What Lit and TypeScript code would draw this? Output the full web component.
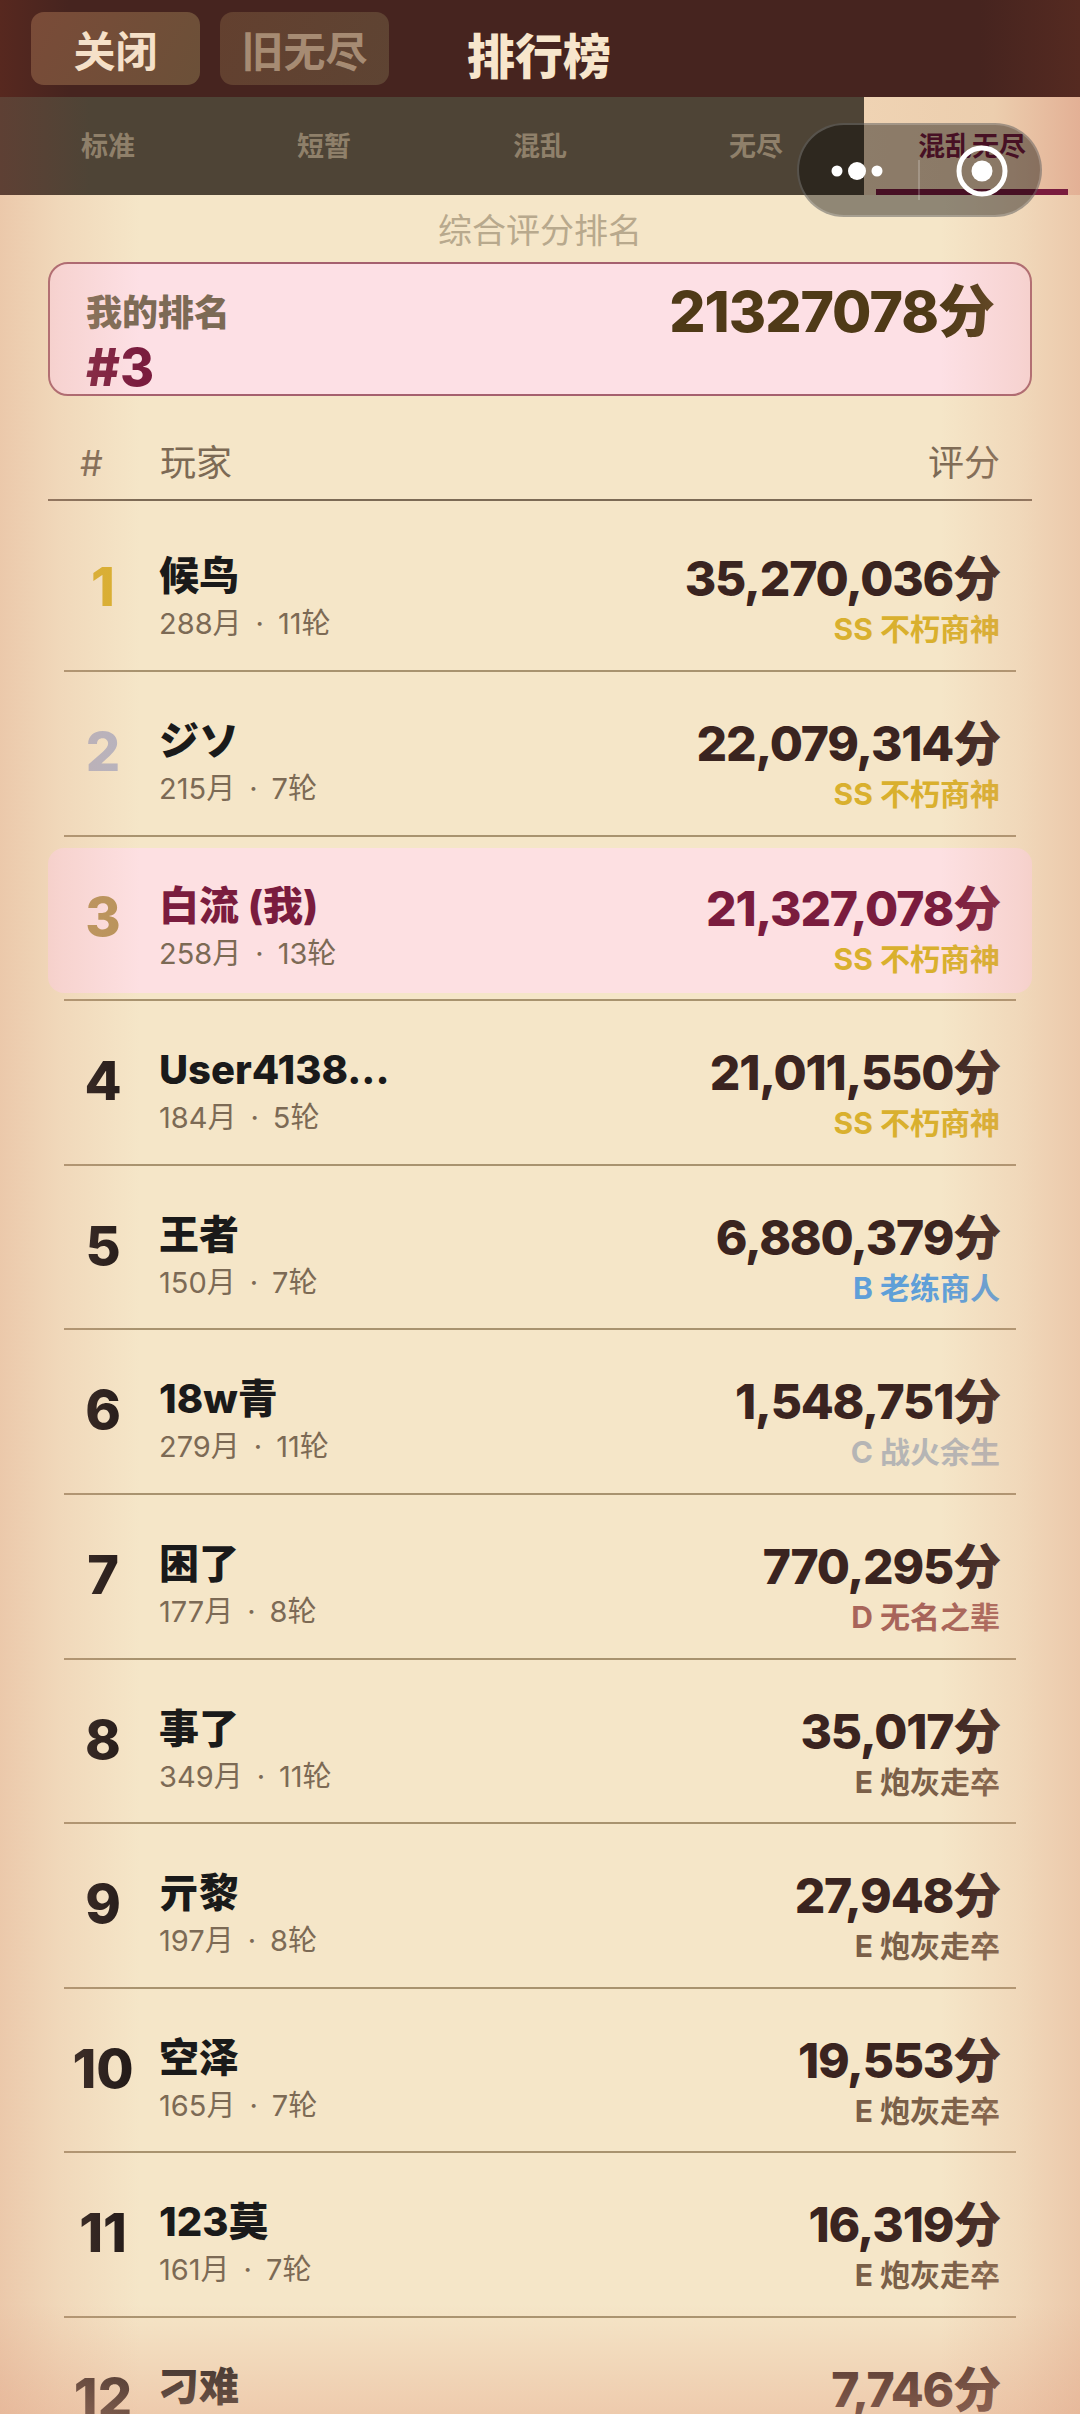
import { LitElement, html, css } from 'lit';
import { customElement } from 'lit/decorators.js';
import { classMap } from 'lit/directives/class-map.js';

interface Player {
  rank: number;
  name: string;
  months?: number;
  rounds?: number;
  score: string;
  grade?: string;
  gradeClass?: string;
  me?: boolean;
}

const ss = { grade: 'SS 不朽商神', gradeClass: 'g-ss' };
const e = { grade: 'E 炮灰走卒', gradeClass: 'g-e' };

const players: Player[] = [
  { rank: 1, name: '候鸟', months: 288, rounds: 11, score: '35,270,036', ...ss },
  { rank: 2, name: 'ジソ', months: 215, rounds: 7, score: '22,079,314', ...ss },
  { rank: 3, name: '白流 (我)', months: 258, rounds: 13, score: '21,327,078', me: true, ...ss },
  { rank: 4, name: 'User4138...', months: 184, rounds: 5, score: '21,011,550', ...ss },
  { rank: 5, name: '王者', months: 150, rounds: 7, score: '6,880,379', grade: 'B 老练商人', gradeClass: 'g-b' },
  { rank: 6, name: '18w青', months: 279, rounds: 11, score: '1,548,751', grade: 'C 战火余生', gradeClass: 'g-c' },
  { rank: 7, name: '困了', months: 177, rounds: 8, score: '770,295', grade: 'D 无名之辈', gradeClass: 'g-d' },
  { rank: 8, name: '事了', months: 349, rounds: 11, score: '35,017', ...e },
  { rank: 9, name: '亓黎', months: 197, rounds: 8, score: '27,948', ...e },
  { rank: 10, name: '空泽', months: 165, rounds: 7, score: '19,553', ...e },
  { rank: 11, name: '123莫', months: 161, rounds: 7, score: '16,319', ...e },
  { rank: 12, name: '刁难', score: '7,746' },
];

const tabs = ['标准', '短暂', '混乱', '无尽', '混乱无尽'];

@customElement('app-root')
export class AppRoot extends LitElement {
  static styles = css`
    :host {
      display: block;
      position: relative;
      width: 1080px;
      height: 2414px;
      overflow: hidden;
      background: #f5e6c8;
      font-family: Inter, 'Noto Sans CJK SC', sans-serif;
    }
    /* warm tint along the page edges, the dark bars carry their own */
    .vignette {
      position: absolute;
      inset: 195px 0 0;
      pointer-events: none;
      background:
        linear-gradient(90deg, rgba(222, 160, 130, 0.42), rgba(222, 160, 130, 0.2) 60px, transparent 140px),
        linear-gradient(270deg, rgba(222, 160, 130, 0.42), rgba(222, 160, 130, 0.2) 60px, transparent 140px),
        linear-gradient(0deg, rgba(228, 165, 135, 0.42), transparent 110px);
    }

    .topbar {
      height: 97px;
      box-sizing: border-box;
      padding-top: 12px;
      display: flex;
      background: linear-gradient(90deg, #57281f, #46241f 70px, #46241f 980px, #552a21);
    }
    .btn {
      width: 169px;
      height: 73px;
      margin-left: 31px;
      border-radius: 13px;
      display: flex;
      align-items: center;
      justify-content: center;
      font-size: 42px;
      font-weight: 700;
      color: #f5e0c8;
      background: linear-gradient(120deg, #7a4b38, #6b5038);
    }
    .btn + .btn {
      margin-left: 20px;
      color: #a68b73;
      background: linear-gradient(120deg, #63402f, #5e4433);
    }
    .title {
      margin: 8px 0 0 78px;
      font-size: 48px;
      line-height: 73px;
      font-weight: 900;
      color: #f7e6cc;
    }

    .tabs {
      height: 98px;
      display: flex;
      background: linear-gradient(90deg, #5e4034, #4e4436 90px);
    }
    .tab {
      width: 216px;
      box-sizing: border-box;
      padding-top: 32px;
      text-align: center;
      font-size: 27px;
      line-height: 36px;
      font-weight: 700;
      color: #8f806a;
    }
    .tab.active {
      height: 98px;
      color: #7a1c3e;
      background: linear-gradient(90deg, #efd3b3, #ecceae 130px, #e3b095);
    }
    .tab.active span {
      display: block;
      margin: -32px 12px 0;
      height: 98px;
      box-sizing: border-box;
      border-bottom: 6px solid #7a1c3e;
      padding-top: 32px;
    }

    .subtitle {
      height: 67px;
      text-align: center;
      font-size: 34px;
      line-height: 72px;
      color: #b8a98d;
    }

    .card {
      margin: 0 48px;
      height: 134px;
      box-sizing: border-box;
      padding: 0 36px;
      display: flex;
      justify-content: space-between;
      border: 2px solid #a5606e;
      border-radius: 20px;
      background: #fde0e5;
    }
    .card-label {
      margin-top: 24px;
      font-size: 36px;
      line-height: 50px;
      font-weight: 800;
      color: #7c6a55;
    }
    .card-rank {
      margin-top: 2px;
      font-size: 52px;
      line-height: 56px;
      font-weight: 800;
      color: #7a1c3e;
    }
    .card-score {
      margin-top: 14px;
      font-size: 57px;
      line-height: 68px;
      font-weight: 800;
      letter-spacing: -1px;
      color: #4f3a17;
    }

    .head {
      margin: 0 48px;
      height: 105px;
      box-sizing: border-box;
      padding: 44px 32px 0;
      display: flex;
      border-bottom: 2px solid #7c6a55;
      font-size: 36px;
      line-height: 46px;
      color: #7c6a55;
    }
    .head .hash {
      width: 80px;
    }
    .head .grow {
      flex: 1;
    }

    .row {
      margin: 0 64px;
      height: 164.6px;
      box-sizing: border-box;
      padding-top: 11px;
      border-bottom: 2px solid #a8936f;
    }
    .row:first-child {
      height: 171px;
      padding-top: 17px;
    }
    .inner {
      margin: 0 -16px;
      height: 145px;
      box-sizing: border-box;
      padding: 0 32px 0 16px;
      display: flex;
      border-radius: 16px;
    }
    .me .inner {
      background: #fde0e2;
    }
    .rank {
      width: 78px;
      margin-right: 17px;
      padding-top: 38px;
      text-align: center;
      font-size: 54px;
      line-height: 62px;
      font-weight: 800;
      color: #1e1716;
    }
    .r1 .rank {
      color: #d9b02e;
    }
    .r2 .rank {
      color: #b6b4c0;
    }
    .r3 .rank {
      color: #b8935a;
    }
    .player {
      flex: 1;
      padding-top: 33px;
    }
    .name {
      font-size: 40px;
      line-height: 50px;
      font-weight: 800;
      color: #1a1a1a;
    }
    .me .name,
    .me .score {
      color: #7a1c3e;
    }
    .meta {
      font-size: 29px;
      line-height: 46px;
      color: #7c6a55;
    }
    .dot {
      margin: 0 14px;
    }
    .right {
      padding-top: 33px;
      text-align: right;
    }
    .score {
      font-size: 48px;
      line-height: 56px;
      font-weight: 800;
      letter-spacing: -1.2px;
      color: #3a2420;
    }
    .grade {
      font-size: 30px;
      line-height: 44px;
      font-weight: 700;
    }
    .g-ss {
      color: #d9b02e;
    }
    .g-b {
      color: #5f9fd8;
    }
    .g-c {
      color: #b5b5b5;
    }
    .g-d {
      color: #a8655a;
    }
    .g-e {
      color: #7a5f48;
    }

    .capsule {
      position: absolute;
      left: 797px;
      top: 123px;
      width: 245px;
      height: 94px;
      box-sizing: border-box;
      border: 2px solid rgba(255, 255, 255, 0.2);
      border-radius: 47px;
      background: rgba(0, 0, 0, 0.41);
    }
    .capsule svg {
      display: block;
      margin: -2px;
    }
  `;

  renderRow(p: Player) {
    const classes = { row: true, me: !!p.me, [`r${p.rank}`]: true };
    return html`
      <div class=${classMap(classes)}>
        <div class="inner">
          <div class="rank">${p.rank}</div>
          <div class="player">
            <div class="name">${p.name}</div>
            ${p.months
              ? html`<div class="meta">${p.months}月<span class="dot">·</span>${p.rounds}轮</div>`
              : ''}
          </div>
          <div class="right">
            <div class="score">${p.score}分</div>
            ${p.grade ? html`<div class="grade ${p.gradeClass}">${p.grade}</div>` : ''}
          </div>
        </div>
      </div>
    `;
  }

  render() {
    return html`
      <div class="topbar">
        <div class="btn">关闭</div>
        <div class="btn">旧无尽</div>
        <div class="title">排行榜</div>
      </div>
      <div class="tabs">
        ${tabs.map(
          (t, i) =>
            html`<div class="tab ${i === tabs.length - 1 ? 'active' : ''}"><span>${t}</span></div>`
        )}
      </div>
      <div class="subtitle">综合评分排名</div>
      <div class="card">
        <div>
          <div class="card-label">我的排名</div>
          <div class="card-rank">#3</div>
        </div>
        <div class="card-score">21327078分</div>
      </div>
      <div class="head">
        <span class="hash">#</span>
        <span class="grow">玩家</span>
        <span>评分</span>
      </div>
      <div>${players.map((p) => this.renderRow(p))}</div>
      <div class="vignette"></div>
      <div class="capsule">
        <svg width="245" height="94" viewBox="0 0 245 94">
          <circle cx="40" cy="48" r="5.5" fill="#fff" />
          <circle cx="60" cy="48" r="9" fill="#fff" />
          <circle cx="80" cy="48" r="5.5" fill="#fff" />
          <rect x="121" y="37" width="2" height="40" fill="rgba(255,255,255,0.2)" />
          <circle cx="185" cy="48" r="23" fill="none" stroke="#fff" stroke-width="5" />
          <circle cx="185" cy="48" r="10.5" fill="#fff" />
        </svg>
      </div>
    `;
  }
}
